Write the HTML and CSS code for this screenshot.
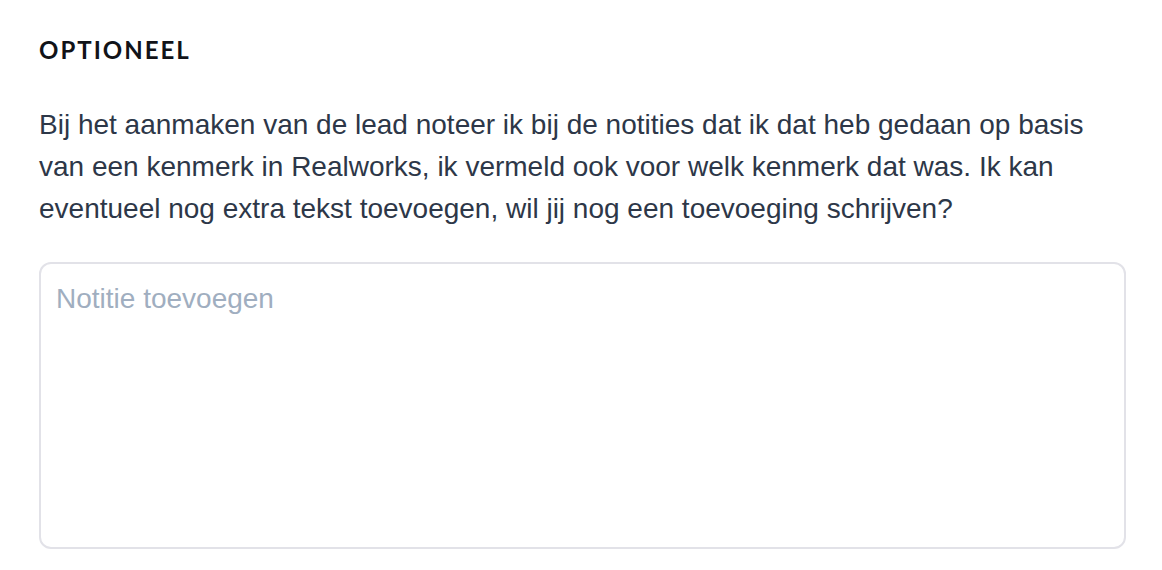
FILE: index.html
```html
<!DOCTYPE html>
<html lang="nl">
<head>
<meta charset="utf-8">
<link rel="stylesheet" href="styles.css">
</head>
<body>
<section class="field">
  <h2 class="label">Optioneel</h2>
  <p class="question">Bij het aanmaken van de lead noteer ik bij de notities dat ik dat heb gedaan op basis van een kenmerk in Realworks, ik vermeld ook voor welk kenmerk dat was. Ik kan eventueel nog extra tekst toevoegen, wil jij nog een toevoeging schrijven?</p>
  <textarea class="note" placeholder="Notitie toevoegen"></textarea>
</section>
</body>
</html>
```
FILE: styles.css
```css
html, body {
  margin: 0;
  background: #ffffff;
}
.field {
  padding: 35px 36px 0 39px;
  display: flex;
  flex-direction: column;
}
.label {
  margin: 0;
  font-family: "Lato", "Liberation Sans", sans-serif;
  font-weight: 700;
  font-size: 24px;
  line-height: 29px;
  letter-spacing: 2px;
  text-transform: uppercase;
  color: #111318;
}
.question {
  margin: 40px 0 0;
  font-family: "Liberation Sans", Arial, sans-serif;
  font-size: 28px;
  line-height: 42px;
  color: #2d3748;
}
.note {
  margin-top: 32px;
  box-sizing: border-box;
  width: 1087px;
  height: 287px;
  border: 2px solid #e2e2e8;
  border-radius: 12px;
  padding: 18px 15px;
  font-family: "Liberation Sans", Arial, sans-serif;
  font-size: 28px;
  line-height: 34px;
  color: #2d3748;
  resize: none;
  outline: none;
}
.note::placeholder {
  color: #a0aec0;
}
```
